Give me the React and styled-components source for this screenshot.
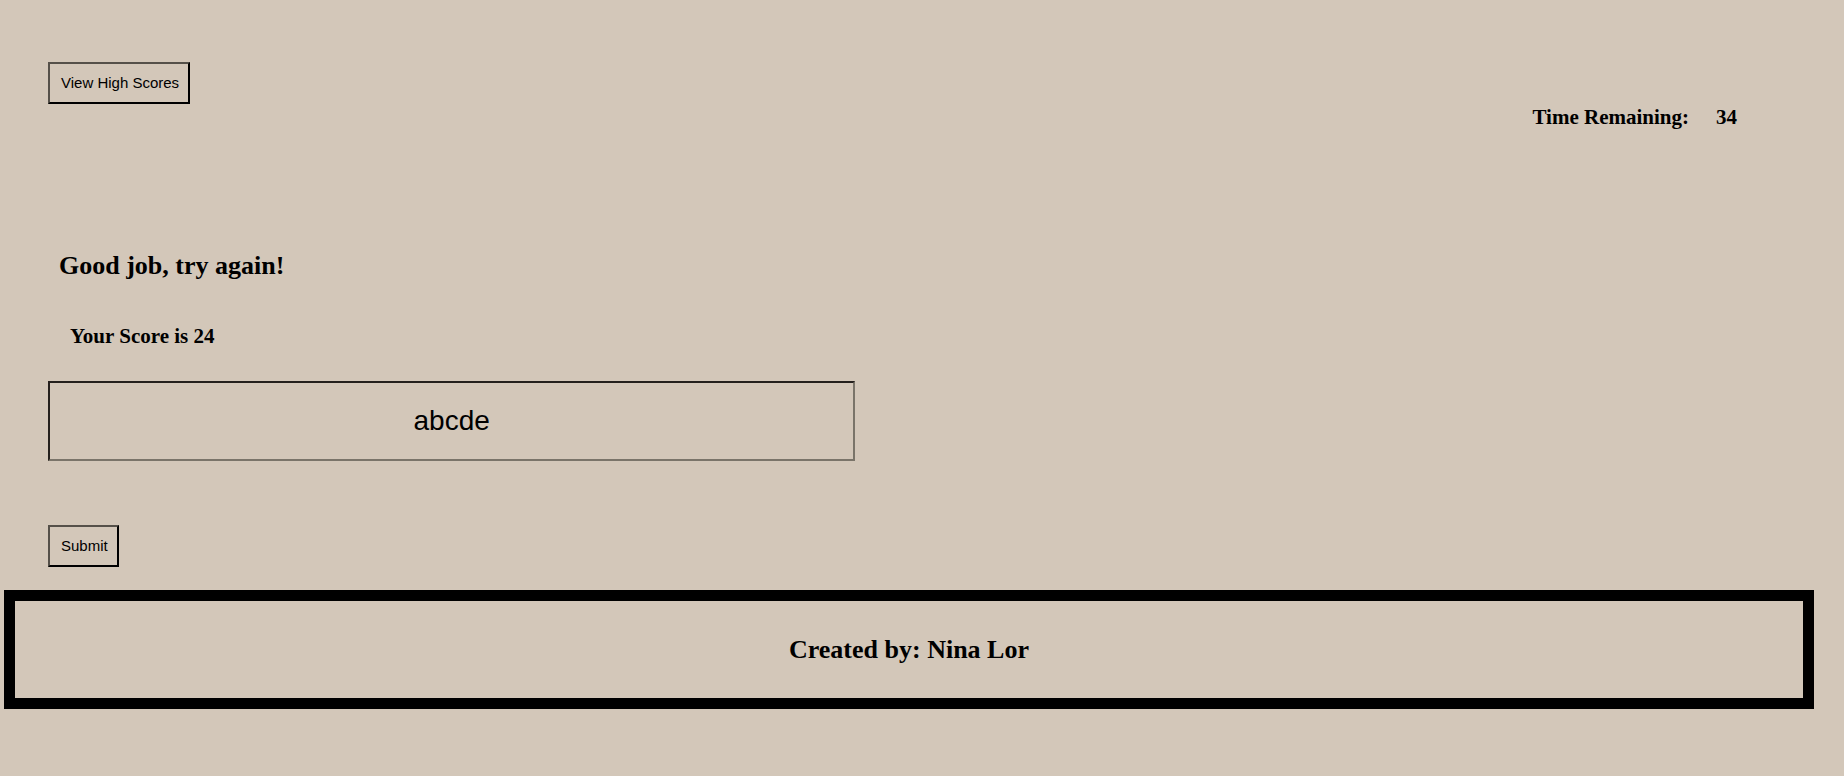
import React, { useState } from "react";
import styled, { createGlobalStyle } from "styled-components";

const GlobalStyle = createGlobalStyle`
  *, *::before, *::after { box-sizing: border-box; }
  body {
    margin: 0;
    background: #d3c7b9;
    color: #000;
    font-family: "Liberation Serif", "Times New Roman", serif;
  }
`;

const Page = styled.div`
  padding: 62px 30px 66px 4px;
`;

const TopBar = styled.header`
  display: flex;
  justify-content: space-between;
  align-items: flex-start;
  padding: 0 77px 0 44px;
`;

const Button = styled.button`
  height: 42px;
  padding: 0 9px 2px 11px;
  border: 2px solid;
  border-color: #555049 #000 #000 #555049;
  border-radius: 0;
  background: transparent;
  color: #000;
  font: 15px "Liberation Sans", Arial, sans-serif;
  white-space: nowrap;
  cursor: pointer;
`;

const Timer = styled.h3`
  display: flex;
  gap: 27px;
  margin: 43px 0 0;
  font-size: 21px;
  line-height: 24px;
`;

const Quiz = styled.form`
  display: flex;
  flex-direction: column;
  align-items: flex-start;
  padding: 122px 11px 23px 44px;
`;

const Message = styled.h2`
  margin: 0 11px;
  font-size: 26px;
  line-height: 30px;
`;

const Score = styled.h3`
  margin: 43px 22px 33px;
  font-size: 21px;
  line-height: 24px;
`;

const Initials = styled.input`
  width: 46%;
  height: 80px;
  margin-bottom: 64px;
  border: 2px solid;
  border-color: #24201d #7a7469 #7a7469 #24201d;
  border-radius: 0;
  background: transparent;
  color: #000;
  font: 28px "Liberation Sans", Arial, sans-serif;
  text-align: center;
  outline: none;
`;

const Footer = styled.footer`
  padding: 33px;
  border: 11px solid #000;
  text-align: center;
`;

const Credit = styled.h2`
  margin: 0;
  font-size: 26px;
  line-height: 31px;
`;

export default function App() {
  const [initials, setInitials] = useState("abcde");

  return (
    <>
      <GlobalStyle />
      <Page>
        <TopBar>
          <Button type="button">View High Scores</Button>
          <Timer>
            <span>Time Remaining:</span>
            <span>34</span>
          </Timer>
        </TopBar>
        <Quiz onSubmit={(event) => event.preventDefault()}>
          <Message>Good job, try again!</Message>
          <Score>Your Score is 24</Score>
          <Initials
            type="text"
            aria-label="Initials"
            value={initials}
            onChange={(event) => setInitials(event.target.value)}
          />
          <Button type="submit">Submit</Button>
        </Quiz>
        <Footer>
          <Credit>Created by: Nina Lor</Credit>
        </Footer>
      </Page>
    </>
  );
}
